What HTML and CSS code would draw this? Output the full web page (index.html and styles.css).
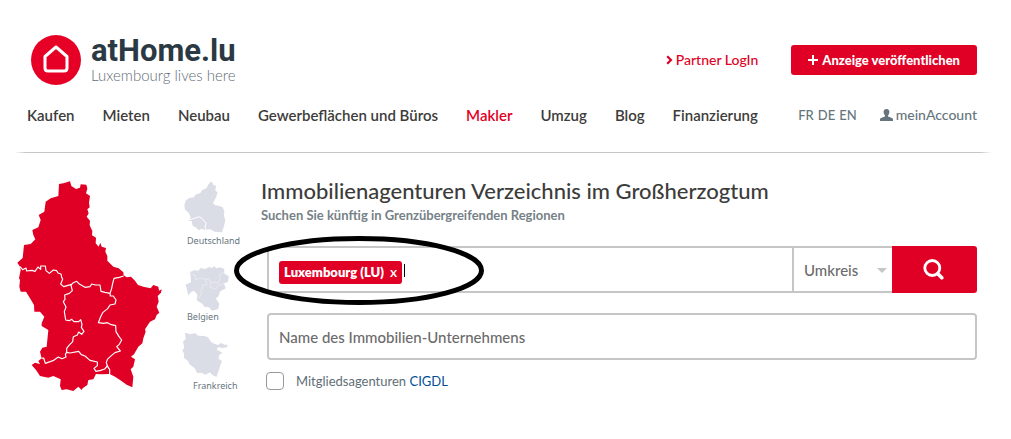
FILE: index.html
```html
<!DOCTYPE html>
<html lang="de">
<head>
<meta charset="utf-8">
<meta name="viewport" content="width=device-width, initial-scale=1">
<title>Immobilienagenturen Verzeichnis – atHome.lu</title>
<link rel="stylesheet" href="styles.css">
</head>
<body>
<header class="header">
  <div class="topbar">
    <a class="logo" href="#">
      <svg class="logo-mark" viewBox="0 0 50 50" aria-hidden="true">
        <circle cx="25" cy="25" r="25" fill="#e60026"/>
        <path d="M14 21.500L25 12L36 21.500V33Q36 36 33 36H17Q14 36 14 33Z" fill="none" stroke="#fff" stroke-width="3" stroke-linejoin="round"/>
      </svg>
      <span class="logo-text">
        <span class="logo-name">atHome.lu</span>
        <span class="logo-claim">Luxembourg lives here</span>
      </span>
    </a>
    <div class="actions">
      <a class="partner" href="#"><svg class="chevron" viewBox="0 0 7 10" aria-hidden="true"><path d="M1.200 1.200L5 5L1.200 8.800" fill="none" stroke="currentColor" stroke-width="2.200"/></svg>Partner LogIn</a>
      <button class="publish" type="button"><svg class="plus" viewBox="0 0 10 10" aria-hidden="true"><path d="M5 0V10M0 5H10" stroke="currentColor" stroke-width="2"/></svg>Anzeige veröffentlichen</button>
    </div>
  </div>
  <div class="navbar">
    <nav class="nav">
      <a href="#">Kaufen</a>
      <a href="#">Mieten</a>
      <a href="#">Neubau</a>
      <a href="#">Gewerbeflächen und Büros</a>
      <a class="active" href="#">Makler</a>
      <a href="#">Umzug</a>
      <a href="#">Blog</a>
      <a href="#">Finanzierung</a>
    </nav>
    <div class="user">
      <div class="langs"><a href="#">FR</a><a href="#">DE</a><a href="#">EN</a></div>
      <a class="account" href="#"><svg class="person" viewBox="0 0 13 12" aria-hidden="true"><path d="M6.500 0C8.600 0 9.600 1.400 9.400 3.300C9.300 4.800 8.600 5.600 8.100 6.200V7.600C9.500 8.500 13 8.700 13 10.600V12H0V10.600C0 8.700 3.500 8.500 4.900 7.600V6.200C4.400 5.600 3.700 4.800 3.600 3.300C3.400 1.400 4.400 0 6.500 0Z" fill="currentColor"/></svg>meinAccount</a>
    </div>
  </div>
</header>
<main class="main">
  <a class="country" href="#" aria-label="Luxembourg">
    <svg viewBox="21 33 438 636" aria-hidden="true">
      <path fill="#e10025" d="M147 42L160 40L180 34L184 48L198 57L210 53L212 43L229 44L232 56L228 70L240 78L237 98L239 112L232 118L236 130L230 140L240 152L239 166L247 183L246 196L258 203L257 220L266 230L271 218L275 230L288 234L286 245L292 258L292 272L310 290L326 295L340 307L341 316L350 322L363 320L375 332L384 345L400 350L422 355L430 345L445 350L447 362L455 358L453 368L443 378L446 395L440 410L448 428L440 435L435 448L420 455L405 478L407 485L400 505L397 520L385 530L372 553L363 560L375 568L370 590L362 598L370 620L367 652L350 644L330 630L315 620L299 612L275 613L258 612L250 628L235 630L232 645L218 655L215 660L205 650L190 663L170 658L155 660L150 648L152 628L130 618L115 623L90 618L78 600L65 585L75 578L90 582L85 573L95 565L90 545L97 533L110 530L115 480L95 468L95 460L103 440L90 425L73 425L72 405L60 385L48 365L32 365L28 350L30 330L27 325L32 300L30 290L22 278L38 264L42 225L62 222L76 208L70 195L67 180L85 172L92 150L86 135L103 125L107 95L122 85L145 78Z"/>
      <g fill="none" stroke="#fff" stroke-width="3.500" stroke-linejoin="round">
        <path d="M30 290L38 299L48 294L50 303L66 301L75 304L84 291L92 298L92 288L106 288L108 302L118 310L130 300L140 302L144 309L153 312L155 322L158 328L152 342L161 350L185 343L190 338L200 334L208 342L225 352L240 350L245 342L256 345L270 345L273 364L285 367L300 370L305 355L308 340L312 325L328 322L341 318"/>
        <path d="M182 342L187 362L178 370L164 375L165 388L160 395L168 411L163 425L167 450L178 452L185 448L192 455L206 455L212 449L216 463L214 472L222 484L215 493L206 486L202 495L190 500L188 515L177 526L170 535L170 547"/>
        <path d="M300 370L301 378L310 378L318 390L315 402L300 405L293 416L278 428L272 440L265 458L280 460L292 458L304 464L317 467L318 485L327 500L335 510L328 523L320 530L331 543L315 548L304 557L292 568L289 578L292 588L284 597L272 601L258 604L252 595L262 587L262 576L240 571L225 558L214 554L206 544L180 549L170 547L166 553L168 561L156 566L145 561L129 572L106 580L101 564L95 565"/>
        <path d="M291 586L299 599L299 613"/>
      </g>
    </svg>
  </a>
  <div class="regions">
    <a class="region" href="#">
      <svg class="de" viewBox="42 33 126 156" aria-hidden="true">
        <path fill="#dadde5" d="M125 34L130 45L138 47L136 62L143 67L139 80L129 99L135 106L146 107L158 112L163 123L162 138L166 151L162 168L156 187L134 185L120 178L104 180L95 176L86 181L80 174L68 167L65 153L56 152L62 140L56 128L45 119L43 105L48 91L58 84L72 82L76 74L91 69L97 60L109 55L116 42Z"/>
        <path fill="none" stroke="#fff" stroke-width="3" d="M57 149L66 147L77 144L88 140L98 147L103 155L109 159L105 171L108 180"/>
      </svg>
      <span>Deutschland</span>
    </a>
    <a class="region belgium" href="#">
      <svg class="be" viewBox="42 288 138 136" aria-hidden="true">
        <path fill="#dadde5" d="M60 306L72 301L86 302L91 294L106 297L117 291L128 294L132 288L140 295L151 292L163 297L163 311L177 319L174 336L162 341L168 355L151 364L145 380L138 386L148 402L145 418L126 423L116 412L104 412L97 402L80 392L82 375L72 363L62 367L54 377L51 361L46 344L62 338L62 324Z"/>
        <path fill="none" stroke="#fff" stroke-width="1.500" stroke-opacity="0.700" d="M62 313L75 316L77 330L90 324L105 328L116 327L121 336L145 339L150 330L151 313L164 307M105 328L111 344L98 346L97 357L90 364L95 373L86 384M121 336L122 353L136 358L145 347L162 341"/>
      </svg>
      <span>Belgien</span>
    </a>
    <a class="region france" href="#">
      <svg class="fr" viewBox="36 155 138 138" aria-hidden="true">
        <path fill="#dadde5" d="M45 157L60 161L76 159L84 166L103 167L114 171L123 185L134 191L145 194L152 188L165 193L173 193L171 201L158 203L144 200L140 208L152 214L157 217L147 225L146 235L156 243L151 255L146 272L139 290L127 284L120 276L106 283L95 277L81 278L74 263L60 253L52 240L42 233L42 220L37 210L43 202L39 184L47 176Z"/>
      </svg>
      <span>Frankreich</span>
    </a>
  </div>
  <section class="search">
    <h1>Immobilienagenturen Verzeichnis im Großherzogtum</h1>
    <p class="subtitle">Suchen Sie künftig in Grenzübergreifenden Regionen</p>
    <form class="form">
      <div class="row">
        <div class="place">
          <span class="tag">Luxembourg (LU)<button type="button" aria-label="Luxembourg (LU) entfernen">x</button></span>
          <span class="caret"></span>
          <input class="place-input" type="text" aria-label="Ort">
        </div>
        <div class="radius">
          <select aria-label="Umkreis"><option>Umkreis</option></select>
          <svg class="arrow" viewBox="0 0 10 5" aria-hidden="true"><path d="M0 0H10L5 5Z" fill="#c6c6c6"/></svg>
        </div>
        <button class="submit" type="submit" aria-label="Suchen">
          <svg viewBox="0 0 21 21" aria-hidden="true"><circle cx="9.300" cy="9" r="7.500" fill="none" stroke="#fff" stroke-width="2.800"/><path d="M14.800 14.800L18.800 18.800" stroke="#fff" stroke-width="3.600" stroke-linecap="round"/></svg>
        </button>
        <svg class="highlight" viewBox="0 0 250 69" aria-hidden="true"><ellipse cx="125" cy="34.500" rx="122.500" ry="32" fill="none" stroke="#000" stroke-width="5"/></svg>
      </div>
      <input class="company" type="text" aria-label="Name des Immobilien-Unternehmens" placeholder="Name des Immobilien-Unternehmens">
      <div class="member">
        <input id="cigdl" type="checkbox">
        <label for="cigdl">Mitgliedsagenturen <a href="#">CIGDL</a></label>
      </div>
    </form>
  </section>
</main>
</body>
</html>
```
FILE: styles.css
```css
* { box-sizing: border-box; }

body {
  margin: 0;
  background: #fff;
  color: #3c3c3b;
  font-family: Lato, "Open Sans", sans-serif;
  font-size: 15px;
  line-height: 20px;
}

a { color: inherit; text-decoration: none; }
button, input, select { font: inherit; }
svg { display: block; flex: none; }

.header {
  margin: 0 20px 0 15px;
  padding: 35px 14px 0 12px;
  border-bottom: 1px solid #c6c6c6;
  border-image: linear-gradient(to right, #fff, #c6c6c6 12px, #c6c6c6 calc(100% - 12px), #fff) 1;
}

.topbar, .navbar {
  display: flex;
  justify-content: space-between;
  align-items: center;
}

.topbar { padding-left: 4px; }

.logo { display: flex; align-items: center; gap: 10px; }
.logo-mark { width: 50px; height: 50px; }
.logo-text { display: flex; flex-direction: column; }
.logo-name {
  color: #2b3944;
  font-family: Roboto, sans-serif;
  font-size: 31px;
  font-weight: 700;
  line-height: 30px;
}
.logo-claim { color: #5f6c75; font-weight: 300; font-size: 15px; line-height: 18px; }

.actions { display: flex; align-items: center; gap: 33px; }
.partner { display: flex; align-items: center; gap: 3px; color: #e10025; font-size: 14px; font-weight: 500; }
.chevron { width: 7px; height: 10px; }
.publish {
  display: flex;
  align-items: center;
  gap: 4px;
  height: 30px;
  padding: 0 17px;
  border: 0;
  border-radius: 3px;
  background: #e10025;
  color: #fff;
  font-size: 13px;
  font-weight: 900;
}
.plus { width: 10px; height: 10px; }

.navbar { padding: 20px 0 27px; }
.nav { display: flex; gap: 28px; font-weight: 600; }
.nav .active { color: #e10025; }
.user { display: flex; align-items: center; gap: 23px; color: #66757d; font-size: 14px; font-weight: 500; }
.langs { display: flex; gap: 4px; font-size: 13px; }
.account { display: flex; align-items: center; gap: 3px; }
.person { width: 13px; height: 12px; }

.main {
  display: flex;
  align-items: flex-start;
  padding: 28px 34px 30px 17px;
}

.country { width: 146px; margin-right: 19px; }
.country svg { width: 146px; height: 212px; }

.regions { display: flex; flex-direction: column; width: 79px; }
.region {
  display: flex;
  flex-direction: column;
  gap: 2px;
  padding-left: 5px;
  color: #66757d;
  font-family: "Noto Sans", sans-serif;
  font-size: 9px;
  line-height: 12px;
}
.region svg { margin-left: -3px; }
.belgium { gap: 0; margin: 19px 0 9px; }
.france { padding-left: 11px; }
.de { width: 42px; height: 52px; }
.be { width: 46px; height: 45px; }
.region .fr { width: 46px; height: 46px; margin-left: -11px; }

.search { flex: 1; min-width: 0; }
h1 { margin: 0; font-size: 22px; font-weight: 500; line-height: 20px; }
.subtitle { margin: 4px 0 0; color: #768187; font-size: 13px; font-weight: 700; }

.form { display: flex; flex-direction: column; margin: 21px 0 0 6px; }
.row { position: relative; display: flex; height: 47px; }
.place {
  display: flex;
  align-items: center;
  flex: 1;
  min-width: 0;
  padding: 5px 10px 0;
  border: 2px solid #c6c6c6;
  border-right: 0;
  border-radius: 3px 0 0 3px;
}
.tag {
  display: flex;
  align-items: center;
  gap: 6px;
  height: 23px;
  padding: 0 5px;
  border-radius: 3px;
  background: #e10025;
  color: #fff;
  font-size: 13px;
  font-weight: 800;
  white-space: nowrap;
}
.tag button { padding: 0; border: 0; background: none; color: inherit; font-size: 14px; font-weight: 600; }
.caret { width: 1px; height: 13px; margin: 0 0 4px 2px; background: #000; }
.place-input { flex: 1; min-width: 0; border: 0; outline: 0; background: none; }

.radius { position: relative; width: 100px; border: 2px solid #c6c6c6; border-right: 0; }
.radius select {
  width: 100%;
  height: 100%;
  padding: 0 10px;
  border: 0;
  background: none;
  color: #6b6b6b;
  font-weight: 500;
  appearance: none;
}
.arrow { position: absolute; top: 20px; right: 5px; width: 10px; height: 5px; pointer-events: none; }

.submit {
  display: flex;
  align-items: center;
  justify-content: center;
  width: 85px;
  padding: 0 2px 0 0;
  border: 0;
  border-radius: 0 3px 3px 0;
  background: #e10025;
}
.submit svg { width: 21px; height: 21px; }

.highlight { position: absolute; top: -10px; left: -33px; width: 250px; height: 69px; pointer-events: none; }

.company {
  height: 47px;
  margin-top: 20px;
  padding: 0 10px;
  border: 2px solid #c6c6c6;
  border-radius: 4px;
  font-weight: 500;
}
.company::placeholder { color: #6b6b6b; }

.member { display: flex; align-items: center; gap: 12px; margin-top: 11px; color: #5f6e76; font-size: 13px; font-weight: 400; }
.member input {
  width: 18px;
  height: 18px;
  margin: 0 0 0 -1px;
  border: 1px solid #999;
  border-radius: 4px;
  background: #fff;
  appearance: none;
}
.member input:checked { background: #e10025; }
.member a { color: #004e96; }
```
